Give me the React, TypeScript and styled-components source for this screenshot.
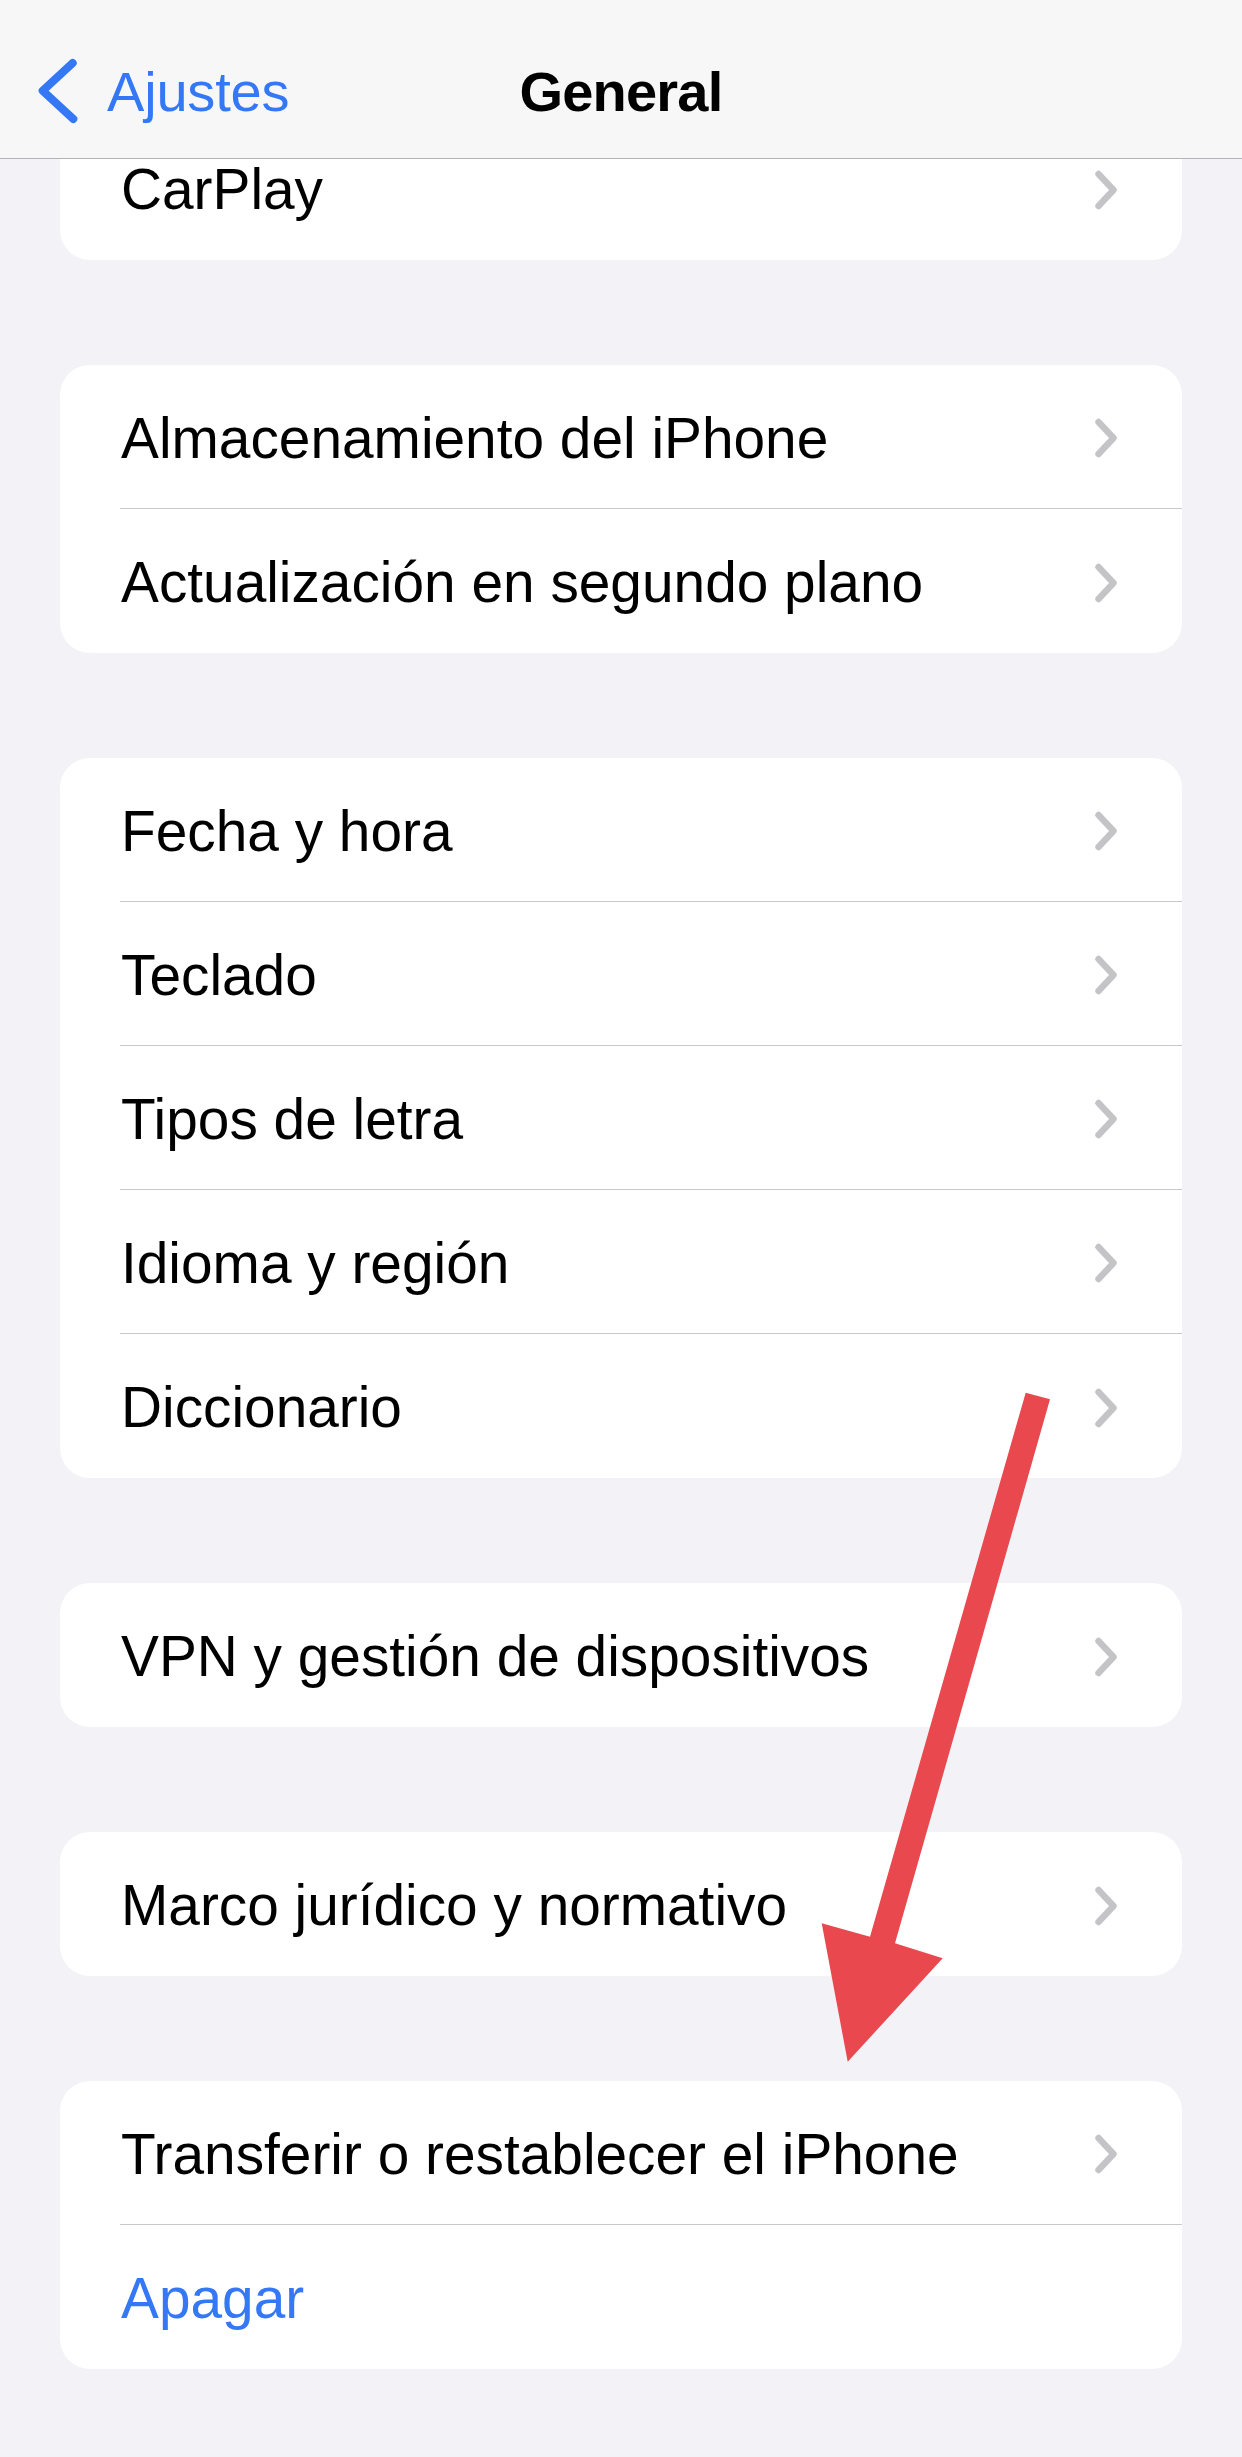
import React from "react";
import styled, { createGlobalStyle } from "styled-components";

const GlobalStyle = createGlobalStyle`
  html, body {
    margin: 0;
    padding: 0;
    background: #f2f2f7;
  }
  body {
    font-family: "Liberation Sans", Arial, "Noto Sans", sans-serif;
    -webkit-font-smoothing: antialiased;
  }
  * { box-sizing: border-box; }
`;

const Page = styled.div`
  position: relative;
  width: 1242px;
  min-height: 2457px;
  background: #f2f2f7;
  overflow: hidden;
`;

const NavBar = styled.header`
  position: absolute;
  top: 0;
  left: 0;
  right: 0;
  height: 159px;
  padding-top: 24px;
  background: #f7f7f7;
  border-bottom: 1px solid #b4b4b6;
  display: grid;
  grid-template-columns: 1fr auto 1fr;
  align-items: center;
  z-index: 2;
`;

const BackButton = styled.div`
  display: flex;
  align-items: center;
  gap: 27px;
  padding-left: 36px;
  color: #3478f6;
  font-size: 56px;
  letter-spacing: -0.2px;
`;

const Title = styled.h1`
  margin: 0;
  font-size: 56px;
  font-weight: 700;
  letter-spacing: -0.8px;
  color: #000;
`;

const Content = styled.main`
  display: flex;
  flex-direction: column;
  gap: 105px;
  padding: 116px 60px 89px;
`;

const Card = styled.section`
  background: #ffffff;
  border-radius: 30px;
  overflow: hidden;
`;

const Row = styled.div`
  height: 144px;
  padding-left: 60px;
`;

const RowInner = styled.div<{ $last: boolean }>`
  height: 100%;
  display: flex;
  align-items: center;
  justify-content: space-between;
  padding: 3px 64px 0 1px;
  border-bottom: ${(p) => (p.$last ? "none" : "1.5px solid #c8c8cb")};
`;

const Label = styled.span<{ $link?: boolean }>`
  font-size: 56.8px;
  color: ${(p) => (p.$link ? "#3478f6" : "#000000")};
  white-space: nowrap;
`;

const ArrowLayer = styled.svg`
  position: absolute;
  top: 0;
  left: 0;
  width: 1242px;
  height: 2457px;
  pointer-events: none;
  z-index: 1;
`;

const Chevron = () => (
  <svg width="24" height="40" viewBox="0 0 24 40" aria-hidden="true">
    <polyline
      points="4.5,4 19.5,20 4.5,36"
      fill="none"
      stroke="#c4c4c7"
      strokeWidth="6.5"
      strokeLinecap="round"
      strokeLinejoin="round"
    />
  </svg>
);

const BackChevron = () => (
  <svg width="44" height="68" viewBox="0 0 44 68" aria-hidden="true">
    <polyline
      points="36.7,6 6.7,33.7 37.3,62"
      fill="none"
      stroke="#3478f6"
      strokeWidth="8"
      strokeLinecap="round"
      strokeLinejoin="round"
    />
  </svg>
);

type Item = { label: string; link?: boolean };

const groups: Item[][] = [
  [{ label: "CarPlay" }],
  [{ label: "Almacenamiento del iPhone" }, { label: "Actualización en segundo plano" }],
  [
    { label: "Fecha y hora" },
    { label: "Teclado" },
    { label: "Tipos de letra" },
    { label: "Idioma y región" },
    { label: "Diccionario" },
  ],
  [{ label: "VPN y gestión de dispositivos" }],
  [{ label: "Marco jurídico y normativo" }],
  [{ label: "Transferir o restablecer el iPhone" }, { label: "Apagar", link: true }],
];

export default function App() {
  return (
    <>
      <GlobalStyle />
      <Page>
        <Content>
          {groups.map((g, gi) => (
            <Card key={gi}>
              {g.map((item, i) => (
                <Row key={item.label}>
                  <RowInner $last={i === g.length - 1}>
                    <Label $link={item.link}>{item.label}</Label>
                    {!item.link && <Chevron />}
                  </RowInner>
                </Row>
              ))}
            </Card>
          ))}
        </Content>
        <ArrowLayer viewBox="0 0 1242 2457" aria-hidden="true">
          <polygon
            points="1025.7,1392.7 1050,1399.3 895,1943.3 942.7,1958.3 847.7,2061.7 821.7,1923.3 870,1936.7"
            fill="#e8484e"
          />
        </ArrowLayer>
        <NavBar>
          <BackButton>
            <BackChevron />
            <span>Ajustes</span>
          </BackButton>
          <Title>General</Title>
          <div />
        </NavBar>
      </Page>
    </>
  );
}
